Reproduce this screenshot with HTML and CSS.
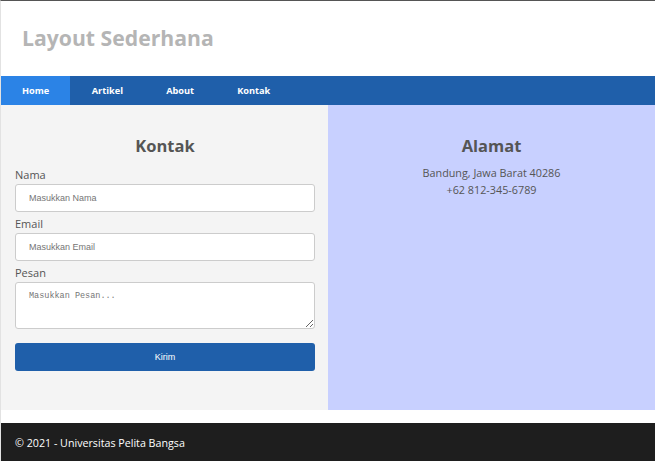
FILE: index.html
```html
<!DOCTYPE html>
<html>
<head>
<meta charset="utf-8">
<link rel="stylesheet" href="styles.css">
</head>
<body>
<div class="page">
  <header class="header">
    <h1 class="title">Layout Sederhana</h1>
  </header>
  <nav class="nav">
    <a class="nav-link active" href="#">Home</a>
    <a class="nav-link" href="#">Artikel</a>
    <a class="nav-link" href="#">About</a>
    <a class="nav-link" href="#">Kontak</a>
  </nav>
  <main class="main">
    <section class="col col-form">
      <h2 class="col-title">Kontak</h2>
      <form class="form">
        <label class="label">Nama</label>
        <input class="field" type="text" placeholder="Masukkan Nama">
        <label class="label">Email</label>
        <input class="field" type="text" placeholder="Masukkan Email">
        <label class="label">Pesan</label>
        <textarea class="field area" placeholder="Masukkan Pesan..."></textarea>
        <button class="btn" type="button">Kirim</button>
      </form>
    </section>
    <section class="col col-addr">
      <h2 class="col-title">Alamat</h2>
      <p class="addr">Bandung, Jawa Barat 40286<br>+62 812-345-6789</p>
    </section>
  </main>
  <footer class="footer">© 2021 - Universitas Pelita Bangsa</footer>
</div>
</body>
</html>
```
FILE: styles.css
```css
* { box-sizing: border-box; }
html, body { margin: 0; padding: 0; background: #fff; }
body { font-family: "Open Sans", "Liberation Sans", sans-serif; color: #555; }
.page {
  border-top: 1px solid #555;
  border-left: 1px solid #e2e2e2;
  height: 461px;
  overflow: hidden;
}
.header { height: 75px; display: flex; align-items: center; padding-left: 21px; }
.title { margin: 0; font-size: 21.2px; font-weight: 700; color: #b5b5b5; padding-bottom: 2px; }
.nav { display: flex; height: 29px; background: #1f5faa; }
.nav-link {
  display: flex; align-items: center;
  padding: 0 21.6px;
  color: #fff; font-size: 9.2px; font-weight: 700; text-decoration: none;
}
.nav-link.active { background: #2b83e6; padding-left: 21px; padding-right: 21px; }
.main { display: flex; height: 305px; }
.col { flex: 0 0 327px; }
.col-form { background: #f4f4f4; padding: 30px 13px 0 14px; }
.col-addr { flex: 1; background: #c8d0ff; padding-top: 30px; text-align: center; }
.col-title { margin: 0; font-size: 16.5px; font-weight: 700; color: #555; text-align: center; line-height: 22px; }
.form { display: flex; flex-direction: column; margin-top: 10px; }
.label { font-size: 11px; line-height: 15px; color: #555; margin-bottom: 2px; }
.field {
  width: 300px; height: 28px;
  border: 1px solid #ccc; border-radius: 3px; background: #fff;
  padding: 0 13px; margin: 0 0 4px 0;
  font-family: "Liberation Sans", Arial, sans-serif; font-size: 9px; color: #555;
}
.field::placeholder { color: #757575; }
.area {
  height: 47px; padding: 8px 13px; resize: vertical;
  font-family: "Liberation Mono", "DejaVu Sans Mono", monospace; font-size: 8.5px;
}
.btn {
  width: 300px; height: 28px; margin-top: 10px;
  background: #1f5faa; color: #fff; border: 0; border-radius: 3px;
  font-family: "Liberation Sans", Arial, sans-serif; font-size: 9px;
}
.addr { margin: 7px 0 0; font-size: 10.8px; line-height: 17px; color: #555; }
.footer {
  margin-top: 13px; height: 40px; background: #1e1e1e; color: #fff;
  font-size: 10.7px; display: flex; align-items: center; padding-left: 14px;
  padding-bottom: 1px;
}
```
